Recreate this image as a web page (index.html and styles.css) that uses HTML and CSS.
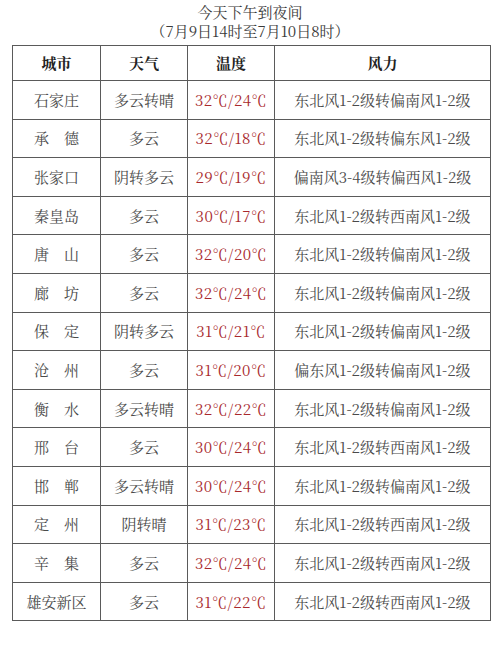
FILE: index.html
```html
<!DOCTYPE html>
<html lang="zh-CN">
<head>
<meta charset="utf-8">
<title>今天下午到夜间</title>
<link rel="stylesheet" href="styles.css">
</head>
<body>
<div class="page">
  <div class="title">
    <div>今天下午到夜间</div>
    <div>（7月9日14时至7月10日8时）</div>
  </div>
  <table class="forecast">
    <colgroup>
      <col class="c-city"><col class="c-weather"><col class="c-temp"><col class="c-wind">
    </colgroup>
    <thead>
      <tr><th>城市</th><th>天气</th><th>温度</th><th>风力</th></tr>
    </thead>
    <tbody>
      <tr><td>石家庄</td><td>多云转晴</td><td class="temp">32℃/24℃</td><td>东北风1-2级转偏南风1-2级</td></tr>
      <tr><td>承　德</td><td>多云</td><td class="temp">32℃/18℃</td><td>东北风1-2级转偏东风1-2级</td></tr>
      <tr><td>张家口</td><td>阴转多云</td><td class="temp">29℃/19℃</td><td>偏南风3-4级转偏西风1-2级</td></tr>
      <tr><td>秦皇岛</td><td>多云</td><td class="temp">30℃/17℃</td><td>东北风1-2级转西南风1-2级</td></tr>
      <tr><td>唐　山</td><td>多云</td><td class="temp">32℃/20℃</td><td>东北风1-2级转偏南风1-2级</td></tr>
      <tr><td>廊　坊</td><td>多云</td><td class="temp">32℃/24℃</td><td>东北风1-2级转偏南风1-2级</td></tr>
      <tr><td>保　定</td><td>阴转多云</td><td class="temp">31℃/21℃</td><td>东北风1-2级转偏南风1-2级</td></tr>
      <tr><td>沧　州</td><td>多云</td><td class="temp">31℃/20℃</td><td>偏东风1-2级转偏南风1-2级</td></tr>
      <tr><td>衡　水</td><td>多云转晴</td><td class="temp">32℃/22℃</td><td>东北风1-2级转偏南风1-2级</td></tr>
      <tr><td>邢　台</td><td>多云</td><td class="temp">30℃/24℃</td><td>东北风1-2级转西南风1-2级</td></tr>
      <tr><td>邯　郸</td><td>多云转晴</td><td class="temp">30℃/24℃</td><td>东北风1-2级转偏南风1-2级</td></tr>
      <tr><td>定　州</td><td>阴转晴</td><td class="temp">31℃/23℃</td><td>东北风1-2级转西南风1-2级</td></tr>
      <tr><td>辛　集</td><td>多云</td><td class="temp">32℃/24℃</td><td>东北风1-2级转西南风1-2级</td></tr>
      <tr><td>雄安新区</td><td>多云</td><td class="temp">31℃/22℃</td><td>东北风1-2级转西南风1-2级</td></tr>
    </tbody>
  </table>
</div>
</body>
</html>
```

FILE: styles.css
```css
html, body {
  margin: 0;
  padding: 0;
  background: #ffffff;
}

body {
  font-family: "Noto Serif CJK SC", "Noto Sans CJK SC", "Liberation Serif", serif;
  color: #4a4a4a;
  font-size: 15px;
}

.page {
  width: 500px;
  padding-top: 2px;
}

.title {
  text-align: center;
  font-size: 15px;
  line-height: 19px;
  color: #3a3a3a;
  margin-bottom: 5px;
}

.forecast {
  margin-left: 12px;
  width: 478px;
  border-collapse: collapse;
  table-layout: fixed;
}

.c-city { width: 88px; }
.c-weather { width: 87px; }
.c-temp { width: 87px; }
.c-wind { width: 216px; }

.forecast th,
.forecast td {
  border: 1.5px solid #5a5a5a;
  text-align: center;
  padding: 0;
  white-space: nowrap;
  line-height: 18px;
}

.forecast th {
  height: 34px;
  font-weight: bold;
  color: #222222;
}

.forecast td {
  height: 37.6px;
}

.forecast td.temp {
  color: #a8282c;
  letter-spacing: 0.5px;
}
```
